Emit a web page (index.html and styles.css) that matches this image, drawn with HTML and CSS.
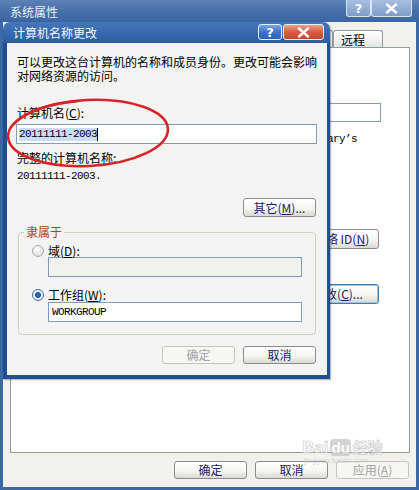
FILE: index.html
```html
<!DOCTYPE html>
<html lang="zh-CN">
<head>
<meta charset="UTF-8">
<meta name="viewport" content="width=device-width, initial-scale=1.0">
<title>系统属性 - 计算机名称更改</title>
<link rel="stylesheet" href="styles.css">
</head>
<body>

<!-- back window: 系统属性 -->
<div class="window sys-window">
  <div class="titlebar">
    <span class="title-text">系统属性</span>
    <div class="title-btns">
      <span class="tbtn help">?</span>
      <span class="tbtn close"><svg width="13" height="11" viewBox="0 0 13 11"><path d="M2 1.5L11 9.5M11 1.5L2 9.5" stroke="#fff" stroke-width="2.4" stroke-linecap="round"/></svg></span>
    </div>
  </div>
  <div class="win-body">
    <div class="tabs">
      <span class="tab">常规</span>
      <span class="tab active">计算机名</span>
      <span class="tab">硬件</span>
      <span class="tab">高级</span>
      <span class="tab">系统还原</span>
      <span class="tab">自动更新</span>
      <span class="tab">远程</span>
    </div>
    <div class="tab-panel">
      <div class="panel-row desc-row">
        <span>计算机描述(<u>D</u>):</span>
        <div class="textbox desc-box"></div>
      </div>
      <p class="example">例如: “Kitchen Computer” 或 “<span class="mono">Mary’s</span></p>
      <div class="panel-row netid-row">
        <span>要使用向导将计算机加入域或工作组，请单击“网络 ID”。</span>
        <button class="btn">网络 ID(<u>N</u>)</button>
      </div>
      <div class="panel-row change-row">
        <span>要重命名此计算机或加入域，请单击“更改”。</span>
        <button class="btn focus">更改(<u>C</u>)...</button>
      </div>
    </div>
    <div class="btn-row">
      <button class="btn">确定</button>
      <button class="btn">取消</button>
      <button class="btn" disabled>应用(<u>A</u>)</button>
    </div>
  </div>
</div>

<!-- front dialog: 计算机名称更改 -->
<div class="window name-dialog">
  <div class="titlebar">
    <span class="title-text">计算机名称更改</span>
    <div class="title-btns">
      <span class="tbtn help">?</span>
      <span class="tbtn close"><svg width="13" height="11" viewBox="0 0 13 11"><path d="M2 1.5L11 9.5M11 1.5L2 9.5" stroke="#fff" stroke-width="2.4" stroke-linecap="round"/></svg></span>
    </div>
  </div>
  <div class="dlg-body">
    <p class="para">可以更改这台计算机的名称和成员身份。更改可能会影响<br>对网络资源的访问。</p>
    <div class="field-label">计算机名(<u>C</u>):</div>
    <div class="textbox name-box"><span class="sel mono">20111111-2003</span><span class="caret"></span></div>
    <div class="full-label">完整的计算机名称:</div>
    <div class="full-name mono">20111111-2003.</div>
    <div class="more-row">
      <button class="btn more-btn">其它(<u>M</u>)...</button>
    </div>
    <fieldset class="member">
      <legend>隶属于</legend>
      <div class="radio-row"><span class="radio"></span><span>域(<u>D</u>):</span></div>
      <div class="textbox member-box off"></div>
      <div class="radio-row second"><span class="radio on"></span><span>工作组(<u>W</u>):</span></div>
      <div class="textbox member-box wg"><span class="mono">WORKGROUP</span></div>
    </fieldset>
    <div class="dlg-btns">
      <button class="btn" disabled>确定</button>
      <button class="btn">取消</button>
    </div>
  </div>
</div>

<!-- red hand-drawn mark -->
<svg class="mark" width="419" height="490" viewBox="0 0 419 490">
  <g fill="none" stroke="#d8232a" stroke-width="2.6" stroke-linecap="round">
    <ellipse cx="88" cy="133" rx="80" ry="33" transform="rotate(-3 88 133)"/>
    <path d="M14 124 Q30 106 78 101"/>
  </g>
</svg>

<div class="watermark">
  <span class="wm-en">Bai</span><span class="wm-du">du</span><span class="wm-cn">经验</span>
  <div class="wm-url">jingyan.baidu.com</div>
</div>

</body>
</html>
```

FILE: styles.css
```css
*{box-sizing:border-box;}
body{
  margin:0;
  width:419px;
  height:490px;
  overflow:hidden;
  position:relative;
  font-family:"Noto Sans CJK SC","Noto Sans",sans-serif;
  font-size:12px;
  line-height:14px;
  color:#000;
  background:#3b69a6;
}
.mono{font-family:"Liberation Mono","DejaVu Sans Mono",monospace;font-size:11px;letter-spacing:-0.6px;}
p{margin:0;}

.window{display:flex;flex-direction:column;}
.titlebar{
  display:flex;
  justify-content:space-between;
  flex-shrink:0;
  height:22px;
  color:#e6eef8;
}
.title-text{padding:4px 0 0 10px;line-height:16px;}
.title-btns{display:flex;align-items:flex-start;}
.tbtn{
  display:flex;
  align-items:center;
  justify-content:center;
  height:17px;
  border:1px solid #dbe4f1;
  border-radius:3px;
  color:#fff;
  font:bold 13px "DejaVu Sans",sans-serif;
}
.tbtn.help{width:25px;}
.tbtn.close{width:41px;}

/* back window */
.sys-window{height:490px;background:#3b69a6;}
.sys-window .titlebar{background:linear-gradient(#5f82b6,#4570a9 50%,#3b65a1);}
.sys-window .title-btns{margin-right:7px;}
.sys-window .tbtn{border-top:none;border-radius:0 0 3px 3px;background:linear-gradient(#a9bfe0,#7f9cca);}
.win-body{
  flex:1;
  display:flex;
  flex-direction:column;
  margin:0 3px 3px;
  padding:8px 6px 0 7px;
  background:#f2f1ec;
}
.tabs{display:flex;justify-content:flex-end;height:17px;padding-right:27px;}
.tab{
  flex-shrink:0;
  min-width:40px;
  padding:2px 8px 0 7px;
  border:1px solid #919b9c;
  border-bottom:none;
  border-radius:3px 3px 0 0;
  background:linear-gradient(#ffffff,#f3f3f0 55%,#dfe2e8);
  line-height:14px;
}
.tab:last-child{min-width:50px;}
.tab-panel{
  flex:1;
  background:#fff;
  border:1px solid #919b9c;
  padding:0 28px 0 12px;
}
.panel-row{display:flex;justify-content:space-between;align-items:center;}
.desc-row{margin-top:55px;}
.desc-box{width:230px;height:19px;}
.example{margin-top:8px;text-align:right;padding-right:24px;white-space:nowrap;}
.netid-row{margin-top:79px;}
.change-row{margin-top:31px;}
.panel-row .btn{width:82px;height:20px;margin-right:2px;}
.btn-row{display:flex;justify-content:flex-end;gap:8px;padding:8px 1px 8px 0;}
.btn-row .btn{width:73px;height:18px;}

/* front dialog */
.name-dialog{
  position:absolute;
  left:3px;
  top:22px;
  width:327px;
  border-radius:7px 7px 0 0;
  background:linear-gradient(#4677bd,#2c5b9f 21px,#1f4f90 21px);
  box-shadow:1px 1px 2px rgba(0,0,0,0.35);
}
.name-dialog .titlebar{height:21px;color:#f2f6fc;}
.name-dialog .title-text{padding-top:3px;}
.name-dialog .title-btns{margin:2px 6px 0 0;gap:1px;}
.name-dialog .tbtn{height:16px;border-color:#e8eef8;}
.name-dialog .tbtn.help{width:24px;background:linear-gradient(#7aa6e8,#3d72cc 50%,#2f61b8);}
.name-dialog .tbtn.close{background:linear-gradient(#eca28d,#d75c3e 50%,#c4472c);}
.dlg-body{
  margin:0 3px 4px 4px;
  padding:12px 10px 11px 9px;
  background:#f3f3f1;
}
.para{white-space:nowrap;padding-left:1px;}
.field-label{margin-top:23px;padding-left:1px;}
.textbox{
  display:flex;
  align-items:center;
  border:1px solid #7f9db9;
  background:#fff;
  padding-left:2px;
}
.name-box{margin-top:4px;height:20px;}
.sel{background:#c9def5;line-height:13px;}
.caret{width:1px;height:13px;background:#000;}
.full-label{margin-top:7px;padding-left:1px;}
.full-name{margin-top:4px;line-height:14px;padding-left:1px;}
.more-row{display:flex;justify-content:flex-end;margin-top:15px;padding-right:1px;}
.more-btn{width:73px;height:19px;}

.member{
  margin:8px 1px 0 2px;
  padding:5px 13px 12px;
  min-width:0;
  border:1px solid #d0d0bf;
  border-radius:4px;
}
.member legend{color:#b3421f;padding:0 2px;margin-left:-8px;line-height:14px;}
.radio-row{display:flex;align-items:center;line-height:13px;}
.radio-row.second{margin-top:11px;}
.radio{
  flex-shrink:0;
  width:12px;
  height:12px;
  margin-right:4px;
  border:1px solid #a9adb3;
  border-radius:50%;
  background:radial-gradient(circle at 40% 35%,#ffffff,#e2e2de 70%);
}
.radio.on{
  border-color:#3f6d9f;
  background:radial-gradient(circle,#2f7fd6 0,#1c4f9a 2.6px,#ffffff 3.4px,#e6e8ea 70%);
}
.member-box{margin-left:16px;width:254px;height:20px;}
.member-box.off{background:#f1f1ee;}
.member-box.wg{margin-top:1px;padding-left:3px;}
.dlg-btns{display:flex;justify-content:flex-end;gap:8px;margin-top:11px;padding-right:1px;}
.dlg-btns .btn{width:73px;height:18px;}

.btn{
  display:flex;
  align-items:center;
  justify-content:center;
  padding:0;
  font:inherit;
  line-height:14px;
  color:#1b1b66;
  border:1px solid #8a8c8e;
  border-radius:3px;
  background:linear-gradient(#ffffff,#f5f5f1 55%,#dadad2);
}
.btn:disabled{color:#a3a3a3;border-color:#c5c5bd;background:#f6f6f2;}
.btn.focus{border-color:#3c7fb1;box-shadow:inset 0 0 0 1px #9cc4ea;}

.mark{position:absolute;left:0;top:0;pointer-events:none;}

.watermark{
  position:absolute;
  left:302px;
  top:440px;
  opacity:0.75;
  font-family:"Liberation Sans",sans-serif;
  pointer-events:none;
}
.wm-en,.wm-cn{font-size:17px;font-weight:bold;color:#fff;-webkit-text-stroke:0.7px #bdbdbd;}
.wm-du{font-size:15px;font-weight:bold;color:#fff;background:#c6c6c6;border-radius:4px;padding:0 1px;margin:0 2px;}
.wm-cn{font-family:"Noto Sans CJK SC",sans-serif;font-size:15px;}
.wm-url{font-size:8px;line-height:9px;color:#c9c9c9;margin-left:2px;}
```
